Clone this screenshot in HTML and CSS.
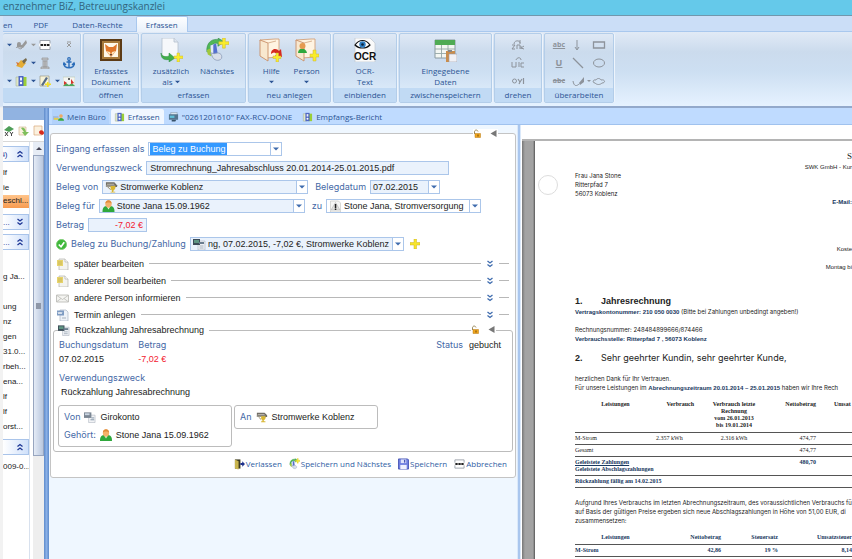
FILE: index.html
```html
<!DOCTYPE html>
<html lang="de">
<head>
<meta charset="utf-8">
<title>Betreuungskanzlei</title>
<link rel="stylesheet" href="styles.css">
</head>
<body>
<svg class="sprite" aria-hidden="true">
  <symbol id="chev" viewBox="0 0 8 8"><path d="M1.5 1l2.5 2 2.5-2M1.5 4.500l2.500 2 2.500-2" fill="none" stroke="currentColor" stroke-width="1.300"/></symbol>
  <symbol id="down" viewBox="0 0 6 4"><path d="M0 .5h6L3 3.500z" fill="currentColor"/></symbol>
  <symbol id="plus" viewBox="0 0 10 10"><path d="M4 0h2.500v3.500H10V6H6.500v4H4V6H0V3.500h4z" fill="#f7e52a" stroke="#c9b22b" stroke-width=".5"/></symbol>
  <symbol id="person" viewBox="0 0 12 12"><path d="M0 12c0-4 1-5.500 4-6h4c3 .5 4 2 4 6z" fill="#2fa83c"/><path d="M4.500 7L6 9.500 7.500 7z" fill="#e9f7e4"/><path d="M2.800 4c0-5 6.400-5 6.400 0 0 5-6.400 5-6.400 0z" fill="#f4b26b"/><path d="M3 3.500c-.5-4.500 6.500-4.500 6 0-1-1.500-5-1.500-6 0z" fill="#e08c3a"/></symbol>
  <symbol id="org" viewBox="0 0 14 12"><path d="M1 1h9l3 3v2H1z" fill="#6d6a62"/><path d="M2 3h8M1 5h10" stroke="#c9c6bb"/><path d="M3 6l3 3M12 5L9 8" stroke="#8b7d55"/><path d="M6 5h5v3L9 10v1h2v1H6v-1h1.500v-1L6 8z" fill="#d8b632"/></symbol>
  <symbol id="screen" viewBox="0 0 13 12"><path d="M5 3h7v9H5z" fill="#eef1f5" stroke="#a8b1bc" stroke-width=".6"/><path d="M6.500 8h4M6.500 10h4" stroke="#8b98a8" stroke-width=".7"/><path d="M0 1h7v6H0z" fill="#3c4c58"/><path d="M1 2h5v3H1z" fill="#5f9583"/><path d="M6 4h5v2H6z" fill="#6a7d8e"/></symbol>
  <symbol id="account" viewBox="0 0 13 12"><path d="M5 4h7v8H5z" fill="#f2f3f5" stroke="#a8b1bc" stroke-width=".6"/><path d="M0 1h8v6H0z" fill="#7b8794"/><path d="M1 2h5v2H1z" fill="#cbd6e2"/><path d="M7 9h4M8 7h3" stroke="#5f7890" stroke-width=".8"/></symbol>
  <symbol id="note" viewBox="0 0 13 12"><path d="M3 1h6l3 3v8H3z" fill="#f3f3ef" stroke="#b3b3ae" stroke-width=".7"/><path d="M9 1v3h3" fill="#fff" stroke="#b3b3ae" stroke-width=".7"/><path d="M1 2h6v6H1z" fill="#e6d36c"/><path d="M2 4h4M2 6h4" stroke="#bda84c" stroke-width=".6"/></symbol>
  <symbol id="mail" viewBox="0 0 13 12"><path d="M.5 3h12v7H.5z" fill="#f4f4f1" stroke="#b5b5b0" stroke-width=".8"/><path d="M1 3.500l5.500 4 5.500-4M1 9.500l4-3M12 9.500l-4-3" fill="none" stroke="#b5b5b0" stroke-width=".7"/></symbol>
  <symbol id="date" viewBox="0 0 13 12"><path d="M4 1h6l2 2v9H4z" fill="#eef2f8" stroke="#a9b4c4" stroke-width=".7"/><path d="M1 1.500h7v5H1z" fill="#7e9bc2"/><path d="M2 3l1 2 1-2 1 2 1-2" fill="none" stroke="#fff" stroke-width=".8"/><path d="M6 9h4" stroke="#8b98a8" stroke-width=".7"/></symbol>
  <symbol id="lock" viewBox="0 0 8 9"><path d="M1 5V3c0-2.500 3-2.500 3.500-.5" fill="none" stroke="#9b8a5d"/><path d="M1.500 4.500H7v4H1.500z" fill="#f0a51d" stroke="#b87b12" stroke-width=".5"/><path d="M4 5.500h1v2H4z" fill="#6d4a0b"/></symbol>
  <symbol id="warn" viewBox="0 0 12 12"><path d="M1 1h8l2 2v9H1z" fill="#f6f6f4" stroke="#c2c2be" stroke-width=".6"/><path d="M6 2.500L10.500 10h-9z" fill="#e2e2df" stroke="#aaa" stroke-width=".5"/><path d="M5.300 4h1.500v4H5.300zM5.300 8.500h1.500V10H5.300z" fill="#222"/></symbol>
  <symbol id="cabinet" viewBox="0 0 12 12"><path d="M1 2h4v9H1z" fill="#dfe7c8" stroke="#9aa88c" stroke-width=".5"/><path d="M7 2h4.500v9H7z" fill="#9bcf38"/><path d="M3.500 1h5v10h-5z" fill="#4e67c5"/><path d="M5 2.500h2v3H5z" fill="#eef1fc"/><circle cx="6" cy="8" r="1.200" fill="#fff"/></symbol>
  <symbol id="desk" viewBox="0 0 12 10"><path d="M0 4h6v4H0z" fill="#a2bbdc"/><path d="M1 6h5v2H1z" fill="#e6ce4b"/><path d="M5.500 9c0-4 6.500-4 6.500 0z" fill="#37a843"/><circle cx="8.700" cy="4" r="2" fill="#edaa64"/></symbol>
  <symbol id="fax" viewBox="0 0 12 10"><path d="M3 0h7v5H3z" fill="#dae5ef" stroke="#8296a9" stroke-width=".6"/><path d="M1 2h10v6H1z" fill="#55748e"/><path d="M2 3.500h5V6H2z" fill="#5fc0d8"/><path d="M4 8h5l-1 2H4z" fill="#39536b"/></symbol>
  <symbol id="abc" viewBox="0 0 12 12"><path d="M1 1.500h10v9H1z" fill="#fff" stroke="#9aa1aa"/><path d="M0 4.500h12v3H0z" fill="#f6f6f6"/><path d="M1.500 6h2.500M4.800 6h2.500M8 6h2.500" stroke="#222" stroke-width="2"/></symbol>
  <symbol id="next" viewBox="0 0 26 26"><path d="M2 15C1 4 9 0 15 2l-1-2 7 4-7 5v-3C8 4 6 9 5 15z" fill="#4fb756" stroke="#2d8940" stroke-width=".6"/><path d="M6 8l6-2 2 13-7-2z" fill="#536fcf"/><path d="M6 8l3-1v10l-3-1z" fill="#e3eaf6"/><path d="M2 13l4-2 1 9-4-2z" fill="#a1c83d"/><path d="M10 17c5-2 9 0 8 5-3 4-9 2-10-2l-2-4z" fill="#d8dee9" stroke="#8697b2" stroke-width=".8"/><path d="M19 0h3v4h4v3h-4v4h-3V7h-4V4h4z" fill="#f9ec2b" stroke="#c8b73c" stroke-width=".6"/></symbol>
  <symbol id="folder" viewBox="0 0 24 24"><path d="M1 2l15-1h4v18l-13 1z" fill="#fff4e2" stroke="#d4a27a" stroke-width=".9"/><path d="M1 2l8 3v18l-8-5z" fill="#f8e8cf" stroke="#c88f66" stroke-width=".9"/><path d="M9 5l8-2" stroke="#dab594"/></symbol>
  <symbol id="pen" viewBox="0 0 12 12"><path d="M1 9c2-3 3 3 6 0" fill="none" stroke="currentColor"/><path d="M2 5l5 1 4-5 1 3-4 5-6-1z" fill="currentColor"/><circle cx="4" cy="5" r="2" fill="currentColor"/></symbol>
</svg>

<header class="titlebar"><h1>enznehmer BiZ, Betreuungskanzlei</h1></header>

<div class="window">
  <div class="edge"></div>
  <div class="app">
    <nav class="menu" aria-label="Menüband">
      <a class="menu-tab clip" href="#">en</a>
      <a class="menu-tab" href="#">PDF</a>
      <a class="menu-tab" href="#">Daten-Rechte</a>
      <a class="menu-tab active" href="#" aria-current="page">Erfassen</a>
    </nav>

    <div class="ribbon">
      <section class="group g-tools">
        <div class="tools">
          <span class="arr"><svg><use href="#down"/></svg></span>
          <button aria-label="Stift"><svg class="dim" viewBox="0 0 12 12"><use href="#pen"/></svg></button>
          <span class="arr dim"><svg><use href="#down"/></svg></span>
          <button aria-label="Text"><svg><use href="#abc"/></svg></button>
          <span></span>
          <button aria-label="Entfernen"><svg class="dim" viewBox="0 0 12 12"><path d="M4 4l4 4M8 4L4 8M4 3h4" stroke="currentColor"/></svg></button>
          <span></span>
          <button aria-label="Pinsel"><svg viewBox="0 0 12 12"><path d="M1 9l5-6 5 3-4 5z" fill="#e5ad35"/><path d="M7 4l4-3 1 2-3 4z" fill="#776949"/><path d="M1 5l3 1-1 3z" fill="#d87537"/></svg></button>
          <span class="arr"><svg><use href="#down"/></svg></span>
          <button aria-label="Turm"><svg class="dim" viewBox="0 0 12 12"><path d="M3 1h6v2H3zM4 4h4v6H4zM2 10h8v2H2z" fill="#c2c5ca" stroke="currentColor" stroke-width=".8"/><path d="M6 4v6" stroke="currentColor"/></svg></button>
          <span></span>
          <button aria-label="Anker"><svg viewBox="0 0 12 12"><circle cx="6" cy="2" r="1.300" fill="none" stroke="#2a6cb8" stroke-width="1.200"/><path d="M6 3v8M3.500 5h5M1 7c0 5 10 5 10 0M0 8l1-2 2 2M9 8l2-2 1 2" fill="none" stroke="#2a6cb8" stroke-width="1.400"/></svg></button>
          <span class="arr"><svg><use href="#down"/></svg></span>
          <button aria-label="Akte"><svg><use href="#cabinet"/></svg></button>
          <span class="arr"><svg><use href="#down"/></svg></span>
          <button aria-label="Notiz"><svg viewBox="0 0 12 12"><path d="M1 1h9v10H1z" fill="#f7f3d8" stroke="#9a9a86" stroke-width=".7"/><path d="M2 10l5-8 2 1-5 8z" fill="#566b87"/><path d="M8 7h1.500v1.500H12V10H9.500v2H8v-2H6V8.500h2z" fill="#f1df27"/></svg></button>
          <span class="arr"><svg><use href="#down"/></svg></span>
          <button aria-label="Bild"><svg viewBox="0 0 12 12"><path d="M0 2h12v9H0z" fill="#f4f6f2" stroke="#b9c8b4" stroke-width=".6"/><path d="M0 11l3-3 3 2 3-2 3 3z" fill="#4fa65c"/><path d="M1 6l3 2-3 2zM8 4l3 4-3 1z" fill="#d7342d"/><circle cx="6" cy="4" r="1" fill="#333"/></svg></button>
        </div>
        <h2></h2>
      </section>

      <section class="group g-open">
        <div class="acts">
          <button class="act"><svg viewBox="0 0 24 24"><path d="M1 1h22v22H1z" fill="#5d3b15"/><path d="M3 3h18v18H3z" fill="#a87a3b"/><path d="M5 5h14v14H5z" fill="#fff8e8"/><path d="M6 6l4 3h4l4-3-1 7-5 6-5-6z" fill="#e0762a"/><path d="M7 13l4 1 1 4zM17 13l-4 1-1 4z" fill="#fbe4bd"/><path d="M11 16h2l-1 2z" fill="#372112"/></svg>Erfasstes<br>Dokument</button>
        </div>
        <h2>öffnen</h2>
      </section>

      <section class="group g-capture">
        <div class="acts">
          <button class="act"><svg viewBox="0 0 24 24"><path d="M3 0h12l4 4v16H3z" fill="#f6f8fb" stroke="#b4bfce" stroke-width=".8"/><path d="M15 0v4h4" fill="#dfe6ef" stroke="#b4bfce" stroke-width=".8"/><path d="M2 15c1 4 5 4 8 3v-3l6 5-6 4v-2.500c-6 1-8-2-8-6.500z" fill="#42b04b" stroke="#2d8940" stroke-width=".5"/><path d="M18 15h2.500v3H24v2.500h-3.500V24H18v-3.500h-3V18h3z" fill="#f9ec2b" stroke="#c8b73c" stroke-width=".5"/></svg>zusätzlich<br>als <svg class="tri"><use href="#down"/></svg></button>
          <button class="act"><svg><use href="#next"/></svg>Nächstes</button>
        </div>
        <h2>erfassen</h2>
      </section>

      <section class="group g-new">
        <div class="acts">
          <button class="act"><svg viewBox="0 0 24 24"><use href="#folder"/><path d="M12 16c0-6 6-6 8-3l2-2 1 8-7-1 2-2c-2-2-4-2-6 0z" fill="#d62a1e"/><path d="M17 15h2.500v3H22v2.500h-2.500V24H17v-3.500h-3V18h3z" fill="#f9ec2b" stroke="#c8b73c" stroke-width=".5"/></svg>Hilfe<br><svg class="tri"><use href="#down"/></svg></button>
          <button class="act"><svg viewBox="0 0 24 24"><use href="#folder"/><path d="M3 15c0-6 8-6 9 0z" fill="#2fa83c"/><circle cx="7.500" cy="8" r="3" fill="#e59a50"/><path d="M18 12h3v4h3v3h-3v4h-3v-4h-3v-3h3z" fill="#f9ec2b" stroke="#c8b73c" stroke-width=".5"/></svg>Person<br><svg class="tri"><use href="#down"/></svg></button>
        </div>
        <h2>neu anlegen</h2>
      </section>

      <section class="group g-show">
        <div class="acts">
          <button class="act ocr"><svg viewBox="0 0 24 24"><path d="M2 0h15l5 5v19H2z" fill="#fafafa" stroke="#bfc6cf" stroke-width=".7"/><path d="M2 7c4-6 11-6 15 0-4 4-11 4-15 0z" fill="#fff" stroke="#111" stroke-width="1.200"/><circle cx="9.500" cy="6.500" r="3.200" fill="#2f7fc4"/><circle cx="9.500" cy="6.500" r="1.300" fill="#0b2138"/><text x="12" y="22" text-anchor="middle">OCR</text></svg>OCR-<br>Text</button>
        </div>
        <h2>einblenden</h2>
      </section>

      <section class="group g-cache">
        <div class="acts">
          <button class="act"><svg viewBox="0 0 24 24"><path d="M2 2h20v18H2z" fill="#f3f7f3" stroke="#8a9aa0"/><path d="M2 2h20v5H2z" fill="#4fab54"/><path d="M2 11h20M2 15.500h20M8.500 7v13M15 7v13" stroke="#94a6a6" stroke-width=".9"/><path d="M13 13h9v11h-9z" fill="#c98d4c"/><path d="M16 16h8v8h-8z" fill="#f1f1f5" stroke="#9a9aa5" stroke-width=".6"/><path d="M15 12h4v2h-4z" fill="#888"/></svg>Eingegebene<br>Daten</button>
        </div>
        <h2>zwischenspeichern</h2>
      </section>

      <section class="group g-rotate">
        <div class="stack">
          <button aria-label="Links drehen"><svg viewBox="0 0 14 12"><path d="M3 5c0-4 6-4 6-1M9 1v4M1 6h3L1 10h3M6 10V6h3v4M10 7v3M13 7l-3 2 3 1" fill="none" stroke="currentColor"/></svg></button>
          <button aria-label="Rechts drehen"><svg viewBox="0 0 14 12"><path d="M5 3c1-3 5-3 5 0M1 5v5h4V5M8 5v5M13 6h-3v4h3" fill="none" stroke="currentColor"/></svg></button>
          <button aria-label="Umdrehen"><svg viewBox="0 0 14 12"><circle cx="3.500" cy="6" r="2" fill="none" stroke="currentColor"/><path d="M7 4l2 3 2-3M9 7L8 9M12.500 3v6" fill="none" stroke="currentColor" stroke-width="1.200"/></svg></button>
        </div>
        <h2>drehen</h2>
      </section>

      <section class="group g-edit">
        <div class="marks">
          <button class="hl">abc</button>
          <button aria-label="Pfeil"><svg viewBox="0 0 14 12"><path d="M5 1v9M3 8l2 3 2-3" fill="none" stroke="currentColor"/></svg></button>
          <button aria-label="Rechteck"><svg viewBox="0 0 14 12"><path d="M1.500 3h11v6h-11z" fill="none" stroke="currentColor" stroke-width="1.300"/></svg></button>
          <button class="ul">U</button>
          <button aria-label="Linie"><svg viewBox="0 0 14 12"><path d="M1 1l10 10" stroke="currentColor" stroke-width="1.200"/></svg></button>
          <button aria-label="Ellipse"><svg viewBox="0 0 14 12"><ellipse cx="7" cy="6" rx="5.500" ry="4" fill="none" stroke="currentColor"/></svg></button>
          <button class="st">abc</button>
          <button aria-label="Freihand"><svg class="wide" viewBox="0 0 20 12"><path d="M1 6c1 6 4 5 6 3" fill="none" stroke="currentColor"/><path d="M7 8l5-6v5l-4 3zM15 5h4l-2 2z" fill="currentColor"/></svg></button>
          <button aria-label="Wolke"><svg viewBox="0 0 14 12"><path d="M3 8c-3 0-2-4 1-3 1-2 4-2 5 0 4-1 5 3 1 3-2 2-5 2-7 0z" fill="none" stroke="currentColor"/></svg></button>
        </div>
        <h2>überarbeiten</h2>
      </section>
    </div>

    <div class="work">
      <aside class="side">
        <div class="side-head"></div>
        <div class="side-tools">
          <svg viewBox="0 0 12 12"><path d="M1 5l5-4 5 3-5 3z" fill="#4e9e58"/><path d="M2 7l3 4M5 7l-3 4M7 7l1.500 2L10 7M8.500 9v2" stroke="#444" fill="none"/></svg>
          <svg viewBox="0 0 12 12"><path d="M1 2h7v8H1z" fill="#fbf1df" stroke="#cfae86" stroke-width=".6"/><path d="M3 3c3-2 5 2 5 4h3l-4 4-3-4h2z" fill="#7fbf5c"/></svg>
          <svg viewBox="0 0 12 12"><path d="M1 1h8v9H1z" fill="#fbf1df" stroke="#d8a77a" stroke-width=".7"/><path d="M6 7c1-3 5-2 5 1s-5 2-5-1z" fill="#d62a1e"/></svg>
        </div>
        <div class="side-body">
          <div class="lists">
            <h3>ɨ)<svg class="up-chev"><use href="#chev"/></svg></h3>
            <ul class="l1"><li>lf</li><li>ie</li><li class="sel">eschl...</li></ul>
            <h3>...<svg><use href="#chev"/></svg></h3>
            <h3 class="second">...<svg class="up-chev"><use href="#chev"/></svg></h3>
            <ul class="l2"><li></li><li>g Ja...</li><li></li><li>ung</li><li>nz</li><li>gen</li><li>31.0...</li><li>rbeh...</li><li>ena...</li><li>lf</li><li>lf</li><li>orst...</li></ul>
            <h3><svg class="up-chev"><use href="#chev"/></svg></h3>
            <ul class="l3"><li>009-0...</li></ul>
          </div>
          <div class="scroll"><span class="up"></span><span class="thumb"><i></i></span></div>
        </div>
      </aside>
      <div class="split"></div>

      <div class="stage">
        <nav class="doc-tabs" aria-label="Fenster">
          <a class="doc-tab home" href="#"><svg><use href="#desk"/></svg>Mein Büro</a>
          <a class="doc-tab active" href="#" aria-current="page"><svg><use href="#cabinet"/></svg>Erfassen</a>
          <a class="doc-tab" href="#"><svg><use href="#fax"/></svg>"0261201610" FAX-RCV-DONE</a>
          <a class="doc-tab" href="#"><svg><use href="#cabinet"/></svg>Empfangs-Bericht</a>
        </nav>
        <div class="panes">
          <main class="form-pane">
            <form class="card">
              <div class="corner"><svg><use href="#lock"/></svg><svg viewBox="0 0 8 9"><path d="M7 1v7L1 4.500z" fill="#777"/></svg></div>
              <div class="row">
                <label for="kind">Eingang erfassen als</label>
                <span class="combo plain w-kind"><select id="kind"><option>Beleg zu Buchung</option></select><b class="hit"><svg><use href="#down"/></svg></b></span>
              </div>
              <div class="row">
                <label for="use">Verwendungszweck</label>
                <input id="use" class="w-use" value="Stromrechnung_Jahresabschluss 20.01.2014-25.01.2015.pdf">
              </div>
              <div class="row">
                <label for="from">Beleg von</label>
                <span class="combo w-party"><svg><use href="#org"/></svg><select id="from"><option>Stromwerke Koblenz</option></select><b class="hit"><svg><use href="#down"/></svg></b></span>
                <label class="mid" for="day">Belegdatum</label>
                <span class="combo w-day"><select id="day"><option>07.02.2015</option></select><b class="hit"><svg><use href="#down"/></svg></b></span>
              </div>
              <div class="row">
                <label for="for">Beleg für</label>
                <span class="combo w-party"><svg><use href="#person"/></svg><select id="for"><option>Stone Jana 15.09.1962</option></select><b class="hit"><svg><use href="#down"/></svg></b></span>
                <label class="mid" for="to">zu</label>
                <span class="combo plain w-to"><svg><use href="#warn"/></svg><select id="to"><option>Stone Jana, Stromversorgung</option></select><b class="hit"><svg><use href="#down"/></svg></b></span>
              </div>
              <div class="row">
                <label for="sum">Betrag</label>
                <input id="sum" class="w-sum red" value="-7,02 €">
              </div>
              <div class="row booking">
                <svg class="ok" viewBox="0 0 12 12"><circle cx="6" cy="6" r="5.500" fill="#3fb83b" stroke="#7ccc72"/><path d="M3 6l2.500 2.500L9 3.500" fill="none" stroke="#fff" stroke-width="1.800"/></svg>
                <label for="book">Beleg zu Buchung/Zahlung</label>
                <span class="combo w-book"><svg><use href="#screen"/></svg><select id="book"><option>ng, 07.02.2015, -7,02 €, Stromwerke Koblenz</option></select><b class="hit"><svg><use href="#down"/></svg></b></span>
                <button type="button" class="add" aria-label="Hinzufügen"><svg><use href="#plus"/></svg></button>
              </div>

              <div class="folds">
                <button type="button" class="fold"><svg><use href="#note"/></svg>später bearbeiten<hr><svg class="more"><use href="#chev"/></svg></button>
                <button type="button" class="fold"><svg><use href="#note"/></svg>anderer soll bearbeiten<hr><svg class="more"><use href="#chev"/></svg></button>
                <button type="button" class="fold"><svg><use href="#mail"/></svg>andere Person informieren<hr><svg class="more"><use href="#chev"/></svg></button>
                <button type="button" class="fold"><svg><use href="#date"/></svg>Termin anlegen<hr><svg class="more"><use href="#chev"/></svg></button>
              </div>

              <fieldset class="refund">
                <legend><svg><use href="#screen"/></svg>Rückzahlung Jahresabrechnung</legend>
                <div class="corner inner"><svg><use href="#lock"/></svg><svg viewBox="0 0 8 9"><path d="M7 1v7L1 4.500z" fill="#777"/></svg></div>
                <div class="facts">
                  <dl><dt>Buchungsdatum</dt><dd>07.02.2015</dd></dl>
                  <dl><dt>Betrag</dt><dd class="red">-7,02 €</dd></dl>
                  <dl class="status"><dt>Status</dt><dd>gebucht</dd></dl>
                </div>
                <dl class="purpose"><dt>Verwendungszweck</dt><dd>Rückzahlung Jahresabrechnung</dd></dl>
                <div class="parties">
                  <div class="party from">
                    <p><span>Von</span><svg><use href="#account"/></svg>Girokonto</p>
                    <p><span>Gehört:</span><svg><use href="#person"/></svg>Stone Jana 15.09.1962</p>
                  </div>
                  <div class="party to">
                    <p><span>An</span><svg><use href="#org"/></svg>Stromwerke Koblenz</p>
                  </div>
                </div>
              </fieldset>

              <div class="actions">
                <button type="button"><svg viewBox="0 0 12 12"><path d="M1 1h6v10H1z" fill="#3c3a20"/><path d="M1 1l4 2v9l-4-1z" fill="#c9b54e"/><path d="M7 5h2V3l3 3-3 3V7H7z" fill="#1d2f8a"/></svg>Verlassen</button>
                <button type="button"><svg><use href="#next"/></svg>Speichern und Nächstes</button>
                <button type="button"><svg viewBox="0 0 12 12"><path d="M.5.500h10l1 1v10H.5z" fill="#6f7fe0" stroke="#4553b5"/><path d="M3 1h6v4H3z" fill="#dfe3fb"/><path d="M2.500 7h7v4.500h-7z" fill="#eef0fd"/><path d="M6.500 1.500h1.500v3H6.500z" fill="#4553b5"/></svg>Speichern</button>
                <button type="button"><svg><use href="#abc"/></svg>Abbrechen</button>
              </div>
            </form>
          </main>
          <div class="split thin"></div>

          <section class="viewer">
            <div class="desk">
              <article class="page">
                <div class="letterhead">
                  <address>Frau Jana Stone<br>Ritterpfad 7<br>56073 Koblenz</address>
                  <i class="hole"></i>
                  <div class="sender">
                    <p class="name">S</p><p>SWK GmbH - Kur</p><p class="mail">E-Mail:</p><p class="cost">Koste</p><p class="hours">Montag bi</p>
                  </div>
                </div>
                <h2><b>1.</b><b>Jahresrechnung</b></h2>
                <p><strong>Vertragskontonummer: 210 050 0030</strong> (Bitte bei Zahlungen unbedingt angeben!)</p>
                <p class="gap">Rechnungsnummer: 248484899666/874466</p>
                <p><strong>Verbrauchsstelle: Ritterpfad 7 , 56073 Koblenz</strong></p>
                <h2 class="dear"><b>2.</b>Sehr geehrter Kundin, sehr geehrter Kunde,</h2>
                <p>herzlichen Dank für Ihr Vertrauen.</p>
                <p>Für unsere Leistungen im <strong>Abrechnungszeitraum 20.01.2014 – 25.01.2015</strong> haben wir Ihre Rech</p>
                <table class="usage">
                  <colgroup><col class="a"><col class="b"><col class="c"><col class="d"><col class="e"></colgroup>
                  <thead><tr><th>Leistungen</th><th class="num used">Verbrauch</th><th>Verbrauch letzte<br>Rechnung<br>vom 26.01.2013<br>bis 19.01.2014</th><th class="num">Nettobetrag</th><th class="cut">Umsat</th></tr></thead>
                  <tbody>
                    <tr><td>M-Strom</td><td>2.357 kWh</td><td class="mid">2.316 kWh</td><td class="num">474,77</td><td></td></tr>
                    <tr><td>Gesamt</td><td></td><td></td><td class="num">474,77</td><td></td></tr>
                    <tr class="blue"><td colspan="3"><u>Geleistete Zahlungen</u><br>Geleistete Abschlagszahlungen</td><td class="num">480,70</td><td></td></tr>
                    <tr class="blue"><td colspan="5">Rückzahlung fällig am 14.02.2015</td></tr>
                  </tbody>
                </table>
                <p>Aufgrund Ihres Verbrauchs im letzten Abrechnungszeitraum, des voraussichtlichen Verbrauchs fü<br>auf Basis der gültigen Preise ergeben sich neue Abschlagszahlungen in Höhe von 51,00 EUR, di<br>zusammensetzen:</p>
                <table class="rates blue">
                  <colgroup><col class="a"><col class="f"><col class="g"><col class="h"></colgroup>
                  <thead><tr><th>Leistungen</th><th class="num">Nettobetrag</th><th class="num">Steuersatz</th><th class="num">Umsatzsteuer</th></tr></thead>
                  <tbody><tr><td>M-Strom</td><td class="num">42,86</td><td class="num">19 %</td><td class="num">8,14</td></tr></tbody>
                </table>
              </article>
            </div>
          </section>
        </div>
      </div>
    </div>
  </div>
</div>
</body>
</html>
```
FILE: styles.css
```css
* { box-sizing: border-box; }
body, h1, h2, h3, p, ul, dl, dt, dd, hr, fieldset, legend { margin: 0; padding: 0; }
body {
  min-height: 100vh;
  display: flex;
  flex-direction: column;
  overflow: hidden;
  background: #fff;
  font: 8px/12px "Open Sans", "Liberation Sans", sans-serif;
  color: #222;
}
button, input, select { font: inherit; color: inherit; margin: 0; padding: 0; border: 0; background: none; border-radius: 0; }
svg { width: 12px; height: 12px; flex: none; display: block; }
a { color: inherit; text-decoration: none; }
ul { list-style: none; }
.sprite { position: absolute; width: 0; height: 0; }
.red { color: #f3202f; }

.titlebar { height: 16px; background: #65c9ea; border-bottom: 1px solid #7197ad; overflow: hidden; }
.titlebar h1 { font: 10px/12px "Open Sans", sans-serif; color: #33657d; padding-left: 3px; }

.window { display: flex; flex: 1; }
.edge { width: 3px; background: linear-gradient(#d5e3f5 90px, #f2f2f2 92px); }
.app { flex: 1; min-width: 0; display: flex; flex-direction: column; }

/* menu and ribbon */
.menu { height: 16px; display: flex; background: #cbdef7; border-bottom: 1px solid #a9c8ee; color: #2c5494; }
.menu-tab { height: 16px; line-height: 18px; padding: 0 12px; }
.menu-tab.clip { padding: 0 9px 0 0; }
.menu-tab.active { background: linear-gradient(#fdfeff, #e8f0fa); border: 1px solid #a9c8ee; border-bottom: 0; border-radius: 2px 2px 0 0; padding: 0 9px; margin-left: 1px; line-height: 16px; }

.ribbon { height: 76px; display: flex; gap: 2px; padding: 1px 0 3px; background: linear-gradient(#e1eaf6, #cbdbed 20px, #cddff2 40px, #e6f2ff); border-bottom: 2px solid #93a9cb; color: #2c5494; }
.group { display: flex; flex-direction: column; border: 1px solid #b3cde9; border-radius: 2px; box-shadow: 1px 0 0 #edf4fc; }
.group h2 { flex: none; height: 14px; margin-top: auto; background: #c1daf4; font: inherit; line-height: 13px; text-align: center; }
.g-tools { width: 78px; border-left: 0; }
.g-open { width: 56px; }
.g-capture { width: 105px; }
.g-new { width: 83px; }
.g-show { width: 64px; }
.g-cache { width: 93px; }
.g-rotate { width: 48px; }
.g-edit { width: 70px; }
.acts { display: flex; justify-content: space-evenly; align-items: flex-start; padding-top: 4px; }
.act { line-height: 11px; }
.act > svg { width: 24px; height: 24px; margin: 0 auto 3px; }
.act .tri { display: inline-block; width: 5px; height: 4px; margin: 0; vertical-align: 1px; }
.ocr text { font: bold 10px "Liberation Sans", sans-serif; fill: #111; }
.tools { display: grid; grid-template-columns: 12px 12px 12px 12px 12px 12px; row-gap: 6px; padding-top: 5px; align-items: center; }
.arr svg { width: 5px; height: 4px; margin: 0 auto; }
.dim { color: #999; }
.stack { display: grid; row-gap: 6px; padding-top: 5px; justify-content: center; color: #8d939b; }
.stack svg { width: 14px; }
.marks { display: grid; grid-template-columns: 14px 14px 14px; grid-auto-rows: 12px; column-gap: 6px; row-gap: 6px; padding: 5px 7px 0; color: #8d939b; }
.marks button { height: 12px; font: bold 7px/10px "Open Sans", sans-serif; }
.marks svg { width: 14px; }
.marks .wide { width: 20px; }
.marks .hl { text-decoration: underline; }
.marks .ul { font-size: 9px; text-decoration: underline; }
.marks .st { text-decoration: line-through; }

/* sidebar */
.work { flex: 1; display: flex; min-height: 0; }
.side { width: 41px; display: flex; flex-direction: column; background: #fff; }
.side-head { height: 12px; background: #91b3e1; }
.side-tools { height: 22px; display: flex; gap: 3px; align-items: center; border-bottom: 1px solid #d8d8d8; }
.side-body { flex: 1; display: flex; justify-content: space-between; font-family: "Liberation Sans", sans-serif; line-height: 15px; }
.lists { width: 27px; padding-top: 4px; border-right: 1px solid #d8e1ee; overflow: hidden; }
.lists h3 { height: 16px; display: flex; justify-content: space-between; align-items: center; padding-right: 4px; border: 1px solid #a9c4ea; border-left: 0; background: linear-gradient(90deg, #fff, #cfe0fa); font: inherit; color: #1c3594; }
.lists h3 svg { width: 8px; height: 8px; margin-left: auto; }
.lists .up-chev { transform: rotate(180deg); }
.lists .second { margin-top: 4px; }
.l1 { padding: 3px 0 6px; }
.l2 { padding: 4px 0 5px; }
.l3 { padding: 4px 0; }
.lists li { height: 15px; white-space: nowrap; }
.lists .sel { background: linear-gradient(#ffc48a, #f79b51); height: 13px; line-height: 12px; }
.scroll { width: 11px; display: flex; flex-direction: column; background: #eee; }
.up { height: 13px; display: grid; place-items: center; background: #e6ecf5; }
.up::before { content: ""; border: 3px solid transparent; border-top: 0; border-bottom: 3px solid #445; }
.thumb { height: 301px; display: grid; place-items: center; border: 1px solid #97a5bf; background: linear-gradient(90deg, #e4ebf6, #b9c7de); }
.thumb i { width: 5px; height: 6px; background: #8e97a8; }
.split { width: 5px; background: linear-gradient(90deg, #5f8ccc, #8ab0e6 50%, #5f8ccc); }
.split.thin { width: 4px; background: #a9c6ee; border: 1px solid #dbe9fa; border-width: 0 1px; }

/* document tabs */
.stage { flex: 1; min-width: 0; display: flex; flex-direction: column; }
.doc-tabs { height: 17px; display: flex; gap: 2px; padding: 1px 3px 0; background: #bfdbff; border-bottom: 1px solid #a0c2ee; color: #2c5494; }
.doc-tab { display: flex; align-items: center; gap: 3px; padding: 0 6px 0 2px; white-space: nowrap; }
.doc-tab svg { width: 11px; height: 10px; }
.doc-tab.home { padding: 0 3px 0 1px; background: #b2d2fb; }
.doc-tab.active { background: #f1f7ff; border-radius: 2px 2px 0 0; padding: 0 4px 0 3px; }
.panes { flex: 1; display: flex; min-height: 0; }

/* form */
.form-pane { flex: none; width: 468px; padding: 8px 1px 0; background: #eff7ff; font: 9px/12px "Liberation Sans", sans-serif; }
.card { position: relative; display: flex; flex-direction: column; background: #fff; border: 1px solid #c4c4c4; border-radius: 3px; padding: 8px 2px 7px; }
.corner { position: absolute; top: -5px; right: 17px; display: flex; gap: 7px; background: #fff; }
.corner svg { width: 9px; height: 9px; }
.row { height: 14px; display: flex; align-items: center; gap: 4px; margin: 0 0 5px 3px; white-space: nowrap; }
.row label, dt, .party span { color: #4569a6; font-family: Inter, "Liberation Sans", sans-serif; }
.row .mid { margin-left: 3px; }
.row input { height: 14px; border: 1px solid #abc6ea; background: #eaf2fc; padding: 0 3px; }
.combo { height: 14px; display: flex; align-items: center; border: 1px solid #abc6ea; background: #eaf2fc; }
.combo.plain { background: #fff; }
.combo > svg { margin-left: 2px; width: 13px; }
.combo select { flex: 1; min-width: 0; appearance: none; height: 12px; padding: 0 2px; line-height: 12px; }
.combo .hit { width: 11px; height: 12px; display: grid; place-items: center; border-left: 1px solid #abc6ea; background: #fff; color: #3f6cae; pointer-events: none; }
.hit svg { width: 6px; height: 4px; }
.w-kind { width: 134px; }
.w-kind select { flex: none; width: 77px; background: #3399ff; color: #fff; padding: 0 0 0 2px; margin-left: 1px; }
.w-kind .hit { margin-left: auto; }
.w-use { width: 303px; }
.w-party { width: 206px; }
.w-day { width: 70px; }
.w-to { width: 155px; }
.row .w-sum { width: 59px; text-align: right; }
.w-book { width: 214px; }
.row.booking { margin: 0 0 4px 3px; }
.ok { width: 11px; height: 11px; }
.add svg { width: 10px; height: 10px; }
.add { margin-left: 2px; }
.folds { padding: 0 4px 0 3px; }
.fold { width: 100%; height: 17px; display: flex; align-items: center; gap: 5px; text-align: left; white-space: nowrap; }
.fold svg { width: 13px; }
.fold hr { flex: 1; border: 0; border-top: 1px solid #b8b8b8; }
.fold .more { width: 8px; height: 8px; color: #3f6cae; }
.fold::after { content: ""; width: 10px; border-top: 1px solid #b8b8b8; }
.refund { position: relative; min-width: 0; border: 1px solid #bcbcbc; border-radius: 3px; padding: 0 4px 4px; }
.refund legend { display: flex; align-items: center; gap: 5px; height: 14px; padding-right: 5px; }
.corner.inner { top: -12px; right: 16px; }
.facts { display: flex; gap: 10px; padding: 1px 7px 0 1px; }
dt { line-height: 14px; }
.facts dd { line-height: 15px; }
.status { display: flex; gap: 6px; margin-left: auto; }
.status dd { line-height: 14px; }
.purpose { padding: 4px 0 0 1px; }
.purpose dd { padding-left: 2px; line-height: 15px; }
.parties { display: flex; align-items: flex-start; gap: 2px; padding-top: 5px; }
.party { border: 1px solid #bcbcbc; border-radius: 3px; padding: 2px 5px; }
.party p { display: flex; align-items: center; gap: 4px; height: 18px; }
.party.from { width: 174px; }
.party.to { width: 144px; }
.actions { display: flex; justify-content: flex-end; gap: 7px; padding: 6px 6px 0 0; color: #2f5da3; font: 8px/12px "Open Sans", sans-serif; }
.actions button { display: flex; align-items: center; gap: 1px; }
.actions svg { width: 11px; height: 12px; }

/* scanned letter */
.viewer { flex: 1; min-width: 0; padding-top: 14px; background: #fff; padding-left: 1px; }
.desk { height: 100%; padding-left: 13px; background: linear-gradient(90deg, #777, #a3a3a3 3px, #a3a3a3 11px, #555 13px); border-top: 2px solid #b4b4b4; }
.page { height: 100%; padding-left: 40px; background: #fff; overflow: hidden; font: 6px/9px Inter, "Liberation Sans", sans-serif; white-space: nowrap; }
.page strong, .page .blue { color: #17375e; }
.page strong { font-family: "Liberation Sans", sans-serif; line-height: 0; }
.letterhead { position: relative; display: flex; justify-content: space-between; height: 154px; }
.letterhead address { font-style: normal; padding-top: 30px; }
.hole { position: absolute; left: -37px; top: 34px; width: 20px; height: 20px; border: 1px solid #ddd; border-radius: 50%; }
.sender { text-align: right; padding-top: 10px; font-family: "Liberation Sans", sans-serif; }
.sender .name { font: 9px/11px "Liberation Serif", serif; }
.sender p + p { padding-top: 1px; }
.sender p.mail { padding-top: 26px; font-weight: bold; color: #17375e; }
.sender p.cost { padding-top: 38px; }
.sender p.hours { padding-top: 9px; }
.page h2 { display: flex; font-size: 9px; line-height: 12px; font-weight: normal; }
.page h2 b { font-family: "Liberation Sans", sans-serif; }
.page h2 b:first-child { width: 26px; }
.page .gap { padding-top: 9px; }
.page .dear { padding: 9px 0 10px; }
.page table { table-layout: fixed; border-collapse: collapse; font: 6px/7px "Liberation Serif", serif; }
.usage { width: 320px; margin: 9px 0 10px; }
.rates { width: 277px; margin-top: 9px; }
.a { width: 81px; } .b { width: 43px; } .c { width: 70px; } .d { width: 47px; } .e { width: 79px; }
.f { width: 65px; } .g { width: 57px; } .h { width: 74px; }
.page th { padding: 0 0 3px; vertical-align: top; text-align: center; }
.page td { padding: 2px 0; vertical-align: top; border: 1px solid #555; border-width: 1px 0; height: 12px; }
.page .num { text-align: right; }
.page .used { padding-right: 5px; }
.page .mid { text-align: center; }
.page th.cut { text-align: left; padding-left: 18px; }
.page .blue td, .page .blue th { font-weight: bold; }
```
